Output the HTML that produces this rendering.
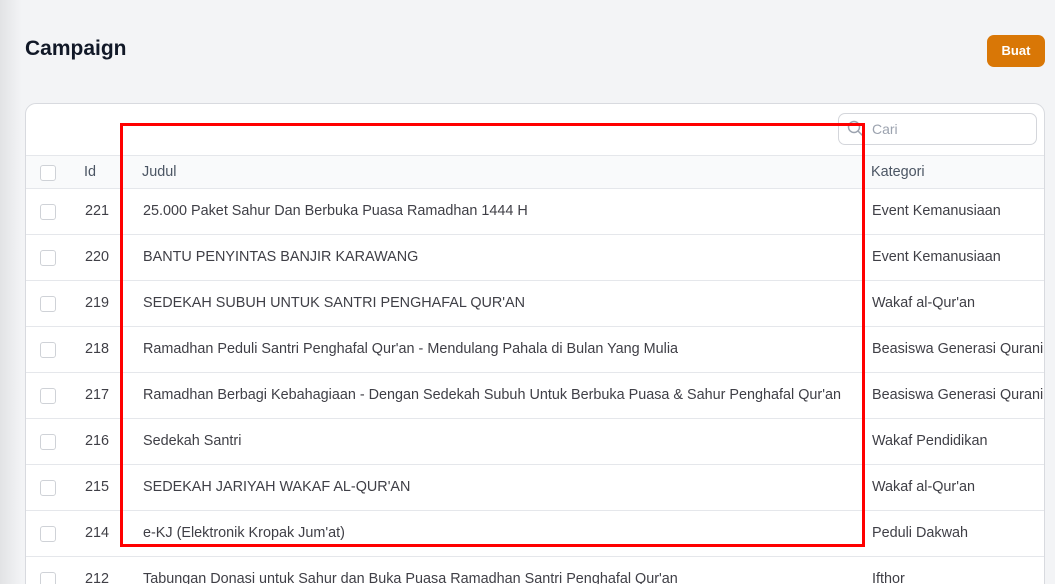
<!DOCTYPE html>
<html style="overflow:hidden"><head><style>
html,body{margin:0;width:1055px;height:584px;overflow:hidden}
body{background:#f3f4f6;font-family:"Liberation Sans",sans-serif;position:relative}
.shade{position:absolute;left:0;top:0;width:22px;height:584px;background:linear-gradient(90deg,#e2e3e5,#f3f4f6)}
h1{position:absolute;left:25px;top:37px;margin:0;font-size:21px;font-weight:bold;color:#111827}
.btn{position:absolute;left:987px;top:35px;width:58px;height:32px;background:#d97706;border-radius:7px;color:#fff;font-size:13px;font-weight:bold;text-align:center;line-height:31px}
.card{position:absolute;left:25px;top:103px;width:1018px;height:500px;background:#fff;border:1px solid #d8dadf;border-radius:11px;overflow:hidden}
.search{position:absolute;left:812px;top:9px;width:199px;height:32px;border:1px solid #d4d6db;border-radius:7px;box-sizing:border-box}
.search span{position:absolute;left:33px;top:7px;font-size:14px;color:#9ca3af}
.row{position:absolute;left:0;width:1040px;border-top:1px solid #e5e7eb;font-size:14.4px;color:#3f3f46}
.row div{position:absolute;white-space:nowrap}
.hdr{background:#f9fafb;color:#4b5563}
.cb{width:14px;height:14px;border:1px solid #cfd2d7;border-radius:3px;left:14px;background:#fff}
.red{position:absolute;left:120px;top:123px;width:739px;height:418px;border:3px solid #f00}
</style></head><body>
<div class="shade"></div>
<h1>Campaign</h1>
<div class="btn">Buat</div>
<div class="card">
<div class="search"><svg width="18" height="18" style="position:absolute;left:8px;top:6px" viewBox="0 0 18 18"><circle cx="7" cy="7" r="5.5" fill="none" stroke="#9ca3af" stroke-width="1.5"/><path d="M11 11l5 5" stroke="#9ca3af" stroke-width="1.5"/></svg><span>Cari</span></div>
<div class="row hdr" style="top:51px;height:33px"><div class="cb" style="top:9px"></div><div style="left:58px;top:8px">Id</div><div style="left:116px;top:8px">Judul</div><div style="left:845px;top:8px">Kategori</div></div>
<div class="row" style="top:84px;height:46px"><div class="cb" style="top:15px"></div><div style="left:59px;top:14px">221</div><div style="left:117px;top:14px">25.000 Paket Sahur Dan Berbuka Puasa Ramadhan 1444 H</div><div style="left:846px;top:14px">Event Kemanusiaan</div></div>
<div class="row" style="top:130px;height:46px"><div class="cb" style="top:15px"></div><div style="left:59px;top:14px">220</div><div style="left:117px;top:14px">BANTU PENYINTAS BANJIR KARAWANG</div><div style="left:846px;top:14px">Event Kemanusiaan</div></div>
<div class="row" style="top:176px;height:46px"><div class="cb" style="top:15px"></div><div style="left:59px;top:14px">219</div><div style="left:117px;top:14px">SEDEKAH SUBUH UNTUK SANTRI PENGHAFAL QUR'AN</div><div style="left:846px;top:14px">Wakaf al-Qur'an</div></div>
<div class="row" style="top:222px;height:46px"><div class="cb" style="top:15px"></div><div style="left:59px;top:14px">218</div><div style="left:117px;top:14px">Ramadhan Peduli Santri Penghafal Qur'an - Mendulang Pahala di Bulan Yang Mulia</div><div style="left:846px;top:14px">Beasiswa Generasi Qurani</div></div>
<div class="row" style="top:268px;height:46px"><div class="cb" style="top:15px"></div><div style="left:59px;top:14px">217</div><div style="left:117px;top:14px">Ramadhan Berbagi Kebahagiaan - Dengan Sedekah Subuh Untuk Berbuka Puasa &amp; Sahur Penghafal Qur'an</div><div style="left:846px;top:14px">Beasiswa Generasi Qurani</div></div>
<div class="row" style="top:314px;height:46px"><div class="cb" style="top:15px"></div><div style="left:59px;top:14px">216</div><div style="left:117px;top:14px">Sedekah Santri</div><div style="left:846px;top:14px">Wakaf Pendidikan</div></div>
<div class="row" style="top:360px;height:46px"><div class="cb" style="top:15px"></div><div style="left:59px;top:14px">215</div><div style="left:117px;top:14px">SEDEKAH JARIYAH WAKAF AL-QUR'AN</div><div style="left:846px;top:14px">Wakaf al-Qur'an</div></div>
<div class="row" style="top:406px;height:46px"><div class="cb" style="top:15px"></div><div style="left:59px;top:14px">214</div><div style="left:117px;top:14px">e-KJ (Elektronik Kropak Jum'at)</div><div style="left:846px;top:14px">Peduli Dakwah</div></div>
<div class="row" style="top:452px;height:46px"><div class="cb" style="top:15px"></div><div style="left:59px;top:14px">212</div><div style="left:117px;top:14px">Tabungan Donasi untuk Sahur dan Buka Puasa Ramadhan Santri Penghafal Qur'an</div><div style="left:846px;top:14px">Ifthor</div></div>
</div>
<div class="red"></div>
</body></html>
